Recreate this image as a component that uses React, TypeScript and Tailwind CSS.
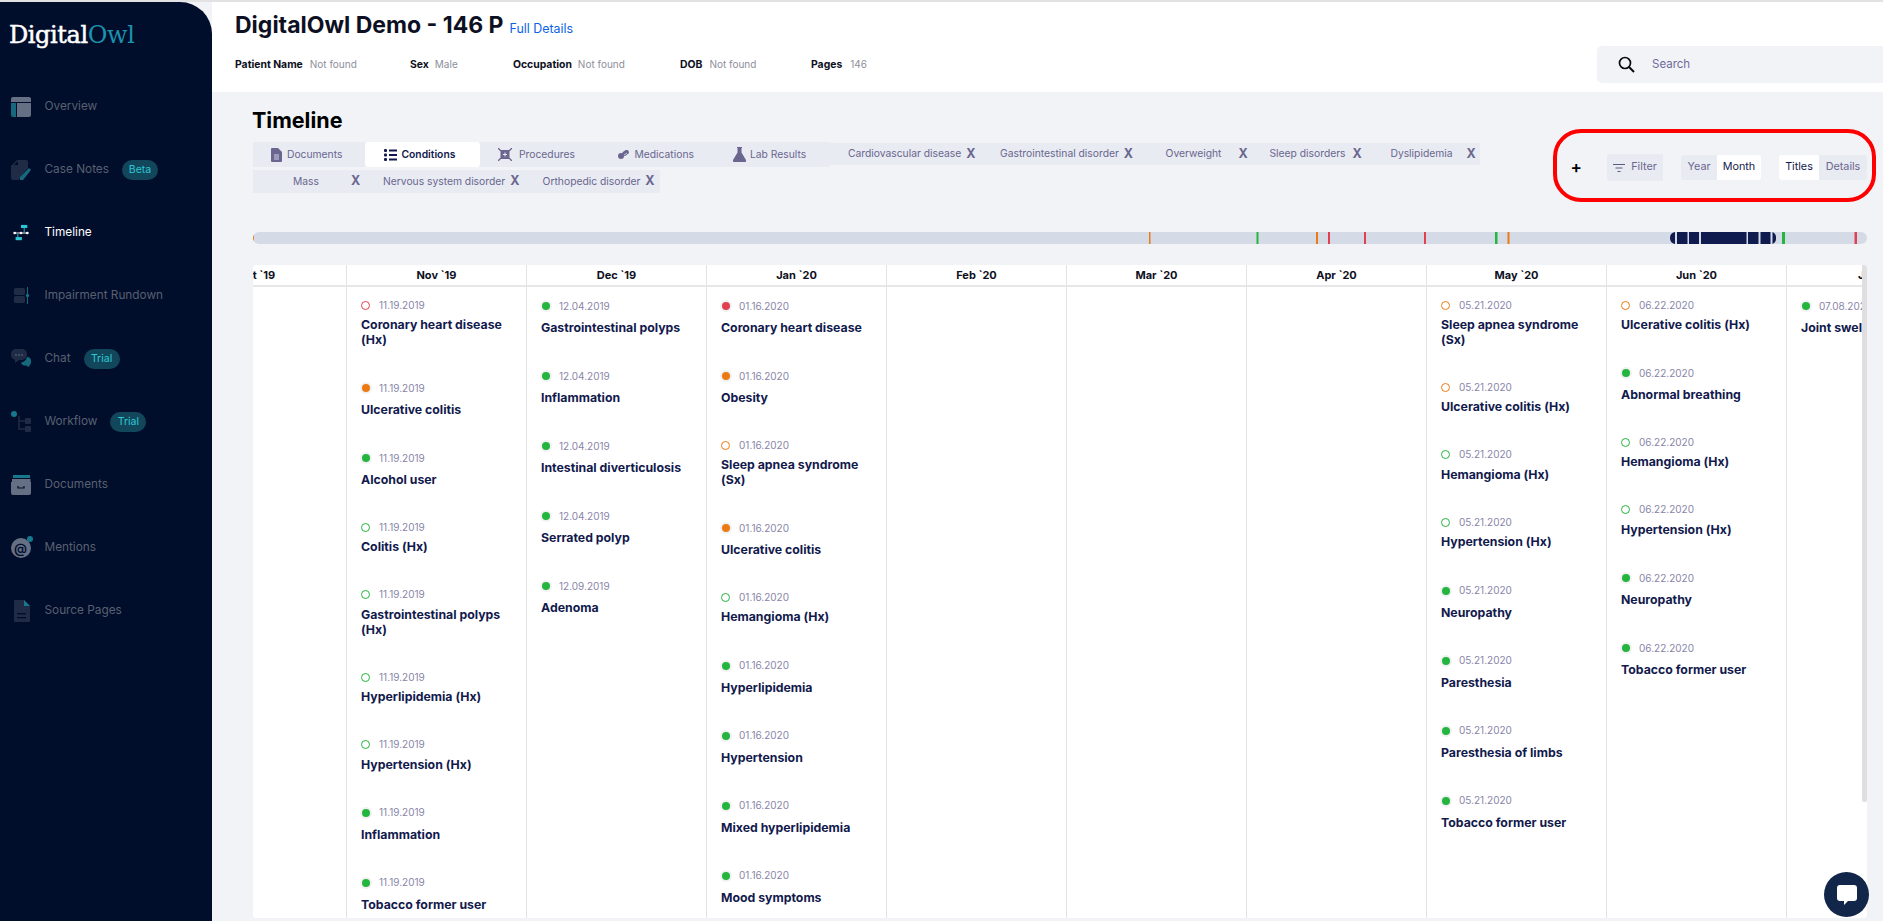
import React from "react";

const font = "font-['Inter','Liberation_Sans',sans-serif]";

type It = { d: string; t: string; c: "g" | "o" | "r"; h?: boolean };
const f = (d: string, t: string, c: "g" | "o" | "r" = "g"): It => ({ d, t, c });
const e = (d: string, t: string, c: "g" | "o" | "r" = "g"): It => ({ d, t, c, h: true });

const n = "11.19.2019", dd = "12.04.2019", j = "01.16.2020", m = "05.21.2020", ju = "06.22.2020";
const columns: { label: string; items: It[] }[] = [
  { label: "Oct `19", items: [] },
  {
    label: "Nov `19",
    items: [
      e(n, "Coronary heart disease (Hx)", "r"), f(n, "Ulcerative colitis", "o"), f(n, "Alcohol user"),
      e(n, "Colitis (Hx)"), e(n, "Gastrointestinal polyps (Hx)"), e(n, "Hyperlipidemia (Hx)"),
      e(n, "Hypertension (Hx)"), f(n, "Inflammation"), f(n, "Tobacco former user"),
    ],
  },
  {
    label: "Dec `19",
    items: [
      f(dd, "Gastrointestinal polyps"), f(dd, "Inflammation"), f(dd, "Intestinal diverticulosis"),
      f(dd, "Serrated polyp"), f("12.09.2019", "Adenoma"),
    ],
  },
  {
    label: "Jan `20",
    items: [
      f(j, "Coronary heart disease", "r"), f(j, "Obesity", "o"), e(j, "Sleep apnea syndrome (Sx)", "o"),
      f(j, "Ulcerative colitis", "o"), e(j, "Hemangioma (Hx)"), f(j, "Hyperlipidemia"), f(j, "Hypertension"),
      f(j, "Mixed hyperlipidemia"), f(j, "Mood symptoms"),
    ],
  },
  { label: "Feb `20", items: [] },
  { label: "Mar `20", items: [] },
  { label: "Apr `20", items: [] },
  {
    label: "May `20",
    items: [
      e(m, "Sleep apnea syndrome (Sx)", "o"), e(m, "Ulcerative colitis (Hx)", "o"), e(m, "Hemangioma (Hx)"),
      e(m, "Hypertension (Hx)"), f(m, "Neuropathy"), f(m, "Paresthesia"), f(m, "Paresthesia of limbs"),
      f(m, "Tobacco former user"),
    ],
  },
  {
    label: "Jun `20",
    items: [
      e(ju, "Ulcerative colitis (Hx)", "o"), f(ju, "Abnormal breathing"), e(ju, "Hemangioma (Hx)"),
      e(ju, "Hypertension (Hx)"), f(ju, "Neuropathy"), f(ju, "Tobacco former user"),
    ],
  },
  { label: "Jul `20", items: [f("07.08.2020", "Joint swelling")] },
];

const fillCls = { g: "bg-[#23b53d]", o: "bg-[#ec7a12]", r: "bg-[#e0404f]" };
const ringCls = { g: "border-[#23b53d]", o: "border-[#ec7a12]", r: "border-[#e0404f]" };

function Item({ it }: { it: It }) {
  return (
    <div className={it.h ? "mb-[29.400px]" : "mb-[29px]"}>
      <div className={`flex items-center ${it.h ? "h-[22px]" : "h-[24px]"}`}>
        {it.h ? (
          <span className={`block w-[9px] h-[9px] rounded-full border bg-white ${ringCls[it.c]}`} />
        ) : (
          <span className={`block ml-[.5px] w-[8px] h-[8px] rounded-full shadow-[0_0_0_2px_#f1f1f4] ${fillCls[it.c]}`} />
        )}
        <span className={`text-[10px] text-[#8885a8] ${it.h ? "ml-[9px]" : "ml-[9.5px]"}`}>{it.d}</span>
      </div>
      <div className={`text-[12.3px] leading-[15px] font-bold text-[#121a4d] ${it.h ? "mt-[1px]" : "mt-[2px]"}`}>{it.t}</div>
    </div>
  );
}

const Overview = () => (
  <svg width="20" height="20" viewBox="0 0 20 20">
    <path d="M0 2a2 2 0 0 1 2-2h16a2 2 0 0 1 2 2v3H0z" fill="#667085" />
    <path d="M0 6h5v14H2a2 2 0 0 1-2-2z" fill="#16697c" />
    <path d="M6 6h14v12a2 2 0 0 1-2 2H6z" fill="#667085" />
  </svg>
);
const CaseNotes = () => (
  <svg width="20" height="20" viewBox="0 0 20 20">
    <path d="M6 0h9a2 2 0 0 1 2 2v6l-7 8-2 4H2a2 2 0 0 1-2-2V6z" fill="#202c45" />
    <path d="M3 5l4-4v4z" fill="#000d2b" />
    <path d="M18 8l2 2-8 10-3 0 0-3z" fill="#16697c" />
  </svg>
);
const TimelineIc = () => (
  <svg width="18" height="18" viewBox="0 0 20 20">
    <rect x="10" y="1" width="7" height="3.5" fill="#2cc5d5" />
    <rect x="13" y="4" width="1" height="5" fill="#2cc5d5" />
    <rect x="4" y="14.5" width="7" height="3.5" fill="#2cc5d5" />
    <rect x="6" y="11" width="1" height="4" fill="#2cc5d5" />
    <rect x="2" y="9.5" width="16" height="1" fill="#fff" />
    <circle cx="3" cy="10" r="1.5" fill="#fff" />
    <circle cx="10" cy="10" r="1.5" fill="#fff" />
    <circle cx="17" cy="10" r="1.5" fill="#fff" />
  </svg>
);
const Impairment = () => (
  <svg width="20" height="20" viewBox="0 0 20 20">
    <rect x="3" y="2" width="11" height="7" rx="1.5" fill="#202c45" />
    <rect x="3" y="10" width="11" height="7" rx="1.5" fill="#202c45" />
    <rect x="16" y="1" width="1" height="17" fill="#16697c" />
    <circle cx="16.5" cy="9.5" r="1.8" fill="#16697c" />
  </svg>
);
const ChatIc = () => (
  <svg width="20" height="20" viewBox="0 0 20 20">
    <path d="M5 0h6a5 5 0 0 1 5 5v1a5 5 0 0 1-5 5H8l-4 3v-3.300A5 5 0 0 1 0 6V5a5 5 0 0 1 5-5z" fill="#202c45" />
    <circle cx="5" cy="6" r="0.8" fill="#667085" />
    <circle cx="8" cy="6" r="0.8" fill="#667085" />
    <circle cx="11" cy="6" r="0.8" fill="#667085" />
    <path d="M16 8a4 4 0 0 1 4 4v1a4 4 0 0 1-1.500 3.500L18 18l-3-1.500h-2A4 4 0 0 1 10 13.500 7 7 0 0 0 16 8z" fill="#16697c" />
  </svg>
);
const WorkflowIc = () => (
  <svg width="20" height="21" viewBox="0 0 20 21">
    <circle cx="3" cy="3" r="3" fill="#16788c" />
    <path d="M8 5v13h6M8 10h6" stroke="#202c45" strokeWidth="1.5" fill="none" />
    <rect x="14" y="7" width="6" height="6" rx="1" fill="#202c45" />
    <rect x="14" y="15" width="6" height="6" rx="1" fill="#202c45" />
  </svg>
);
const DocsIc = () => (
  <svg width="20" height="20" viewBox="0 0 20 20">
    <rect x="2" y="0" width="17" height="3" fill="#16788c" />
    <rect x="1" y="4" width="18.500" height="3" fill="#667085" />
    <path d="M0 7h20v11a2 2 0 0 1-2 2H2a2 2 0 0 1-2-2z" fill="#667085" />
    <path d="M7 11v2h6v-2" stroke="#000d2b" strokeWidth="1.200" fill="none" />
  </svg>
);
const MentionIc = () => (
  <span className="relative block w-[20px] h-[20px] rounded-full bg-[#667085] text-center text-[13px] leading-[20px] font-semibold text-[#000d2b]">
    @
    <span className="absolute -top-[2px] -right-[2px] w-[6px] h-[6px] rounded-full bg-[#16788c]" />
  </span>
);
const SourceIc = () => (
  <svg width="20" height="22" viewBox="0 0 20 22">
    <path d="M3 1a1 1 0 0 1 1-1h9l6 6v15a1 1 0 0 1-1 1H4a1 1 0 0 1-1-1z" fill="#202c45" />
    <path d="M13 0l6 6h-6z" fill="#16788c" />
    <rect x="6" y="13" width="9" height="1.300" fill="#000d2b" />
    <rect x="6" y="17" width="9" height="1.300" fill="#000d2b" />
  </svg>
);

const nav: { label: string; icon: React.ReactNode; badge?: string; active?: boolean }[] = [
  { label: "Overview", icon: <Overview /> },
  { label: "Case Notes", icon: <CaseNotes />, badge: "Beta" },
  { label: "Timeline", icon: <TimelineIc />, active: true },
  { label: "Impairment Rundown", icon: <Impairment /> },
  { label: "Chat", icon: <ChatIc />, badge: "Trial" },
  { label: "Workflow", icon: <WorkflowIc />, badge: "Trial" },
  { label: "Documents", icon: <DocsIc /> },
  { label: "Mentions", icon: <MentionIc /> },
  { label: "Source Pages", icon: <SourceIc /> },
];

const tc = "#6a668f";
const DocT = () => (
  <svg width="11" height="14" viewBox="0 0 11 14">
    <path d="M0 1a1 1 0 0 1 1-1h6l4 4v9a1 1 0 0 1-1 1H1a1 1 0 0 1-1-1z" fill={tc} />
    <path d="M3 7h5M3 9h5M3 11h5" stroke="#e8ebf2" strokeWidth="0.800" />
  </svg>
);
const CondT = () => (
  <svg width="13" height="12" viewBox="0 0 13 12">
    <g fill="#121a4d">
      <rect x="0" y="0" width="3" height="3" rx="1" />
      <rect x="0" y="4.500" width="3" height="3" rx="1" />
      <rect x="0" y="9" width="3" height="3" rx="1" />
      <rect x="5" y="0.500" width="8" height="2" />
      <rect x="5" y="5" width="8" height="2" />
      <rect x="5" y="9.500" width="8" height="2" />
    </g>
  </svg>
);
const ProcT = () => (
  <svg width="14" height="13" viewBox="0 0 14 13">
    <rect x="2.500" y="2" width="9" height="9" fill={tc} />
    <path d="M0 0l3 3M14 0l-3 3M0 13l3-3M14 13l-3-3" stroke={tc} strokeWidth="1.300" />
    <path d="M7 4.500v4M5 6.500h4" stroke="#e8ebf2" strokeWidth="1" />
  </svg>
);
const MedT = () => (
  <svg width="11" height="10" viewBox="0 0 11 10">
    <circle cx="3" cy="6" r="3" fill={tc} />
    <rect x="4" y="1" width="7" height="4.500" rx="2.200" fill={tc} transform="rotate(-35 7 3)" />
    <path d="M6 5l3-2" stroke="#e8ebf2" strokeWidth="0.700" />
  </svg>
);
const LabT = () => (
  <svg width="13" height="15" viewBox="0 0 13 15">
    <path d="M4 0h5v1H8.500v4.500L13 13a1.300 1.300 0 0 1-1 2H1a1.300 1.300 0 0 1-1-2l4.500-7.500V1H4z" fill={tc} />
  </svg>
);

const tabs = [
  { label: "Documents", icon: <DocT />, w: "w-[112px] pl-[18px]", gap: "gap-[5px]" },
  { label: "Conditions", icon: <CondT />, w: "w-[115px] pl-[18.5px]", active: true, gap: "gap-[5px]" },
  { label: "Procedures", icon: <ProcT />, w: "w-[115px] pl-[18px]", gap: "gap-[7px]" },
  { label: "Medications", icon: <MedT />, w: "w-[117px] pl-[22.5px]", gap: "gap-[6px]" },
  { label: "Lab Results", icon: <LabT />, w: "w-[118px] pl-[21px]", gap: "gap-[4px]" },
];

function Chip({ label, cls }: { label: string; cls: string }) {
  return (
    <div className={`flex items-center whitespace-nowrap ${cls}`}>
      <span className="min-w-[80px] text-center">{label}</span>
      <span className="ml-[5px] text-[12.500px] font-bold text-[#6a668f] leading-none">X</span>
    </div>
  );
}

export default function App() {
  return (
    <div className={`relative w-full h-[921px] overflow-hidden flex border-t-2 border-[#e2e2e2] bg-[#f2f3f7] ${font}`}>
      <aside className="w-[212px] shrink-0 bg-[#000d2b] rounded-tr-[32px] flex flex-col">
        <div className="h-[73px] pl-[9px] pt-[18px]">
          <span className="font-['DejaVu_Serif',serif] text-[24px] leading-[30px] tracking-[-0.4px] text-white [-webkit-text-stroke:0.5px_white]">
            Digital<span className="text-[#1b93ad] font-light [-webkit-text-stroke:0px]">Owl</span>
          </span>
        </div>
        <nav className="flex flex-col">
          {nav.map((it) => (
            <div key={it.label} className="h-[63px] flex items-center pl-[10px]">
              <span className="w-[21px] h-[22px] flex items-center justify-center">{it.icon}</span>
              <span className={`ml-[13.500px] text-[11.800px] ${it.active ? "text-white" : "text-[#596070]"}`}>{it.label}</span>
              {it.badge && (
                <span className="ml-[13px] h-[20px] w-[36px] rounded-full bg-[#12465a] text-[#2fc7d6] text-[10.5px] flex items-center justify-center">
                  {it.badge}
                </span>
              )}
            </div>
          ))}
        </nav>
      </aside>

      <main className="flex-1 min-w-0 flex flex-col">
        <header className="h-[90px] shrink-0 bg-white pl-[23px] flex flex-col">
          <div className="flex items-baseline h-[44px] pt-[9px]">
            <h1 className="text-[23px] leading-[28px] font-bold text-[#0d1022]">DigitalOwl Demo - 146 P</h1>
            <a className="ml-[6px] text-[12.4px] text-[#0b63e5]">Full Details</a>
          </div>
          <div className="flex items-center text-[10.4px] leading-[37px]">
            <div className="flex w-[175px]"><b className="font-bold text-[#0d1022]">Patient Name</b><span className="ml-[7px] text-[#8d8f99] text-[10px]">Not found</span></div>
            <div className="flex w-[103px]"><b className="font-bold text-[#0d1022]">Sex</b><span className="ml-[6px] text-[#8d8f99] text-[10px]">Male</span></div>
            <div className="flex w-[167px]"><b className="font-bold text-[#0d1022]">Occupation</b><span className="ml-[6px] text-[#8d8f99] text-[10px]">Not found</span></div>
            <div className="flex w-[131px]"><b className="font-bold text-[#0d1022]">DOB</b><span className="ml-[7px] text-[#8d8f99] text-[10px]">Not found</span></div>
            <div className="flex w-[100px]"><b className="font-bold text-[#0d1022]">Pages</b><span className="ml-[8px] text-[#8d8f99] text-[10px]">146</span></div>
            <div className="ml-auto w-[286px] h-[37px] bg-[#f2f3f7] rounded-l-[5px] flex items-center pl-[21px]">
              <svg width="17" height="17" viewBox="0 0 17 17" fill="none" stroke="#0a0a0a">
                <circle cx="7" cy="7" r="5.500" strokeWidth="1.700" />
                <path d="M11 11l5 5" strokeWidth="2" />
              </svg>
              <span className="ml-[17px] text-[#6f6b9c] text-[11.500px] leading-none">Search</span>
            </div>
          </div>
        </header>

        <section className="flex-1 min-h-0 flex flex-col pl-[41px] pr-[16px] pb-[3px]">
          <h2 className="mt-[15px] h-[26px] -ml-[1px] text-[21.5px] leading-[26px] font-bold text-black">Timeline</h2>
          <div className="mt-[9px] flex items-center justify-between">
            <div className="flex flex-col text-[10.3px] text-[#6a668f]">
              <div className="flex items-start">
                <div className="flex h-[25px] bg-[#e8ebf2]">
                  {tabs.map((t) => (
                    <div key={t.label} className={`${t.w} ${t.gap} flex items-center ${t.active ? "bg-white text-[#121a4d] font-semibold rounded-[3px]" : ""}`}>
                      {t.icon}
                      <span>{t.label}</span>
                    </div>
                  ))}
                </div>
                <div className="flex h-[22px] mt-[1px] bg-[#e8ebf2]">
                  <Chip label="Cardiovascular disease" cls="w-[170px] pl-[18px]" />
                  <Chip label="Gastrointestinal disorder" cls="w-[153.5px]" />
                  <Chip label="Overweight" cls="w-[114px]" />
                  <Chip label="Sleep disorders" cls="w-[114px]" />
                  <Chip label="Dyslipidemia" cls="w-[98.5px]" />
                </div>
              </div>
              <div className="flex h-[23px] mt-[3px] w-[407px] bg-[#e8ebf2]">
                <Chip label="Mass" cls="w-[130px] pl-[13px]" />
                <Chip label="Nervous system disorder" cls="w-[159.6px]" />
                <Chip label="Orthopedic disorder" cls="w-[117.4px]" />
              </div>
            </div>
            <div className="flex items-center text-[10.8px]">
              <span className="mr-[25px] text-[17px] leading-none font-semibold text-black">+</span>
              <div className="flex items-center justify-center gap-[5px] w-[56px] h-[27px] bg-[#e8ebf2] rounded-l-[3px] text-[#6a668f]">
                <svg width="13" height="8" viewBox="0 0 13 8" stroke="#5d5a80" strokeWidth="1"><path d="M0 .5h12M2.500 4h7M4.500 7.500h3" /></svg>
                Filter
              </div>
              <div className="ml-[18px] flex h-[25px] rounded-[3px] overflow-hidden">
                <span className="w-[36px] flex items-center justify-center bg-[#e8ebf2] text-[#6a668f]">Year</span>
                <span className="w-[44px] flex items-center justify-center bg-white text-[#121a4d]">Month</span>
              </div>
              <div className="ml-[18px] flex h-[25px] rounded-[3px] overflow-hidden">
                <span className="w-[40px] flex items-center justify-center bg-white text-[#121a4d]">Titles</span>
                <span className="w-[48px] flex items-center justify-center bg-[#e8ebf2] text-[#6a668f]">Details</span>
              </div>
            </div>
          </div>

          <div className="mt-[39px] h-[12px] shrink-0 bg-[#d4dae6] rounded-full overflow-hidden">
            <svg width="1614" height="12" viewBox="253 0 1614 12" className="block">
              <rect x="253" y="0" width="1" height="12" fill="#ec7a12" />
              <rect x="1149" y="0" width="1.500" height="12" fill="#ec7a12" />
              <rect x="1256.500" y="0" width="2" height="12" fill="#23b53d" />
              <rect x="1316" y="0" width="2" height="12" fill="#ec7a12" />
              <rect x="1328" y="0" width="2" height="12" fill="#e0404f" />
              <rect x="1364" y="0" width="2" height="12" fill="#e0404f" />
              <rect x="1424" y="0" width="2" height="12" fill="#e0404f" />
              <rect x="1495" y="0" width="2.500" height="12" fill="#23b53d" />
              <rect x="1507.500" y="0" width="2" height="12" fill="#ec7a12" />
              <path d="M1675 0v12a6 6 0 0 1-5-6 6 6 0 0 1 5-6zM1772.500 0a6 6 0 0 1 3.500 6 6 6 0 0 1-3.500 6z" fill="#0f1a4f" />
              <rect x="1677" y="0" width="10.500" height="12" fill="#0f1a4f" />
              <rect x="1689" y="0" width="10" height="12" fill="#0f1a4f" />
              <rect x="1701" y="0" width="45.500" height="12" fill="#0f1a4f" />
              <rect x="1748" y="0" width="10.500" height="12" fill="#0f1a4f" />
              <rect x="1760.500" y="0" width="10" height="12" fill="#0f1a4f" />
              <rect x="1782" y="0" width="3" height="12" fill="#23b53d" />
              <rect x="1854.500" y="0" width="2.500" height="12" fill="#e0404f" />
            </svg>
          </div>

          <div className="relative mt-[21px] flex-1 min-h-0 bg-white rounded-[3px] overflow-hidden">
            <div className="flex h-full w-max -ml-[86px]">
              {columns.map((c) => (
                <div key={c.label} className="w-[180px] shrink-0 flex flex-col border-r border-[#e3e3e6]">
                  <div className="h-[22px] shrink-0 border-b-2 border-[#e7e7ea] text-center text-[11px] leading-[20px] font-bold text-[#0d1022]">
                    {c.label}
                  </div>
                  <div className="pt-[7px] pl-[14px] pr-[14px]">
                    {c.items.map((it, i) => (
                      <Item key={i} it={it} />
                    ))}
                  </div>
                </div>
              ))}
            </div>
            <div className="absolute top-0 right-0 w-[5px] h-[537px] bg-[#dfdfe1] rounded-b-[2px]" />
          </div>
        </section>
      </main>

      <div className="absolute left-[1553px] top-[127px] w-[323px] h-[73px] rounded-[28px] border-[4px] border-[#f00]" />
      <div className="absolute left-[1824px] top-[870px] w-[45px] h-[45px] rounded-full bg-[#12264a] flex items-center justify-center">
        <svg width="22" height="22" viewBox="0 0 22 22">
          <path d="M4 1h14a3 3 0 0 1 3 3v10a3 3 0 0 1-3 3h-6l-4 4v-4H4a3 3 0 0 1-3-3V4a3 3 0 0 1 3-3z" fill="#fff" />
        </svg>
      </div>
    </div>
  );
}
